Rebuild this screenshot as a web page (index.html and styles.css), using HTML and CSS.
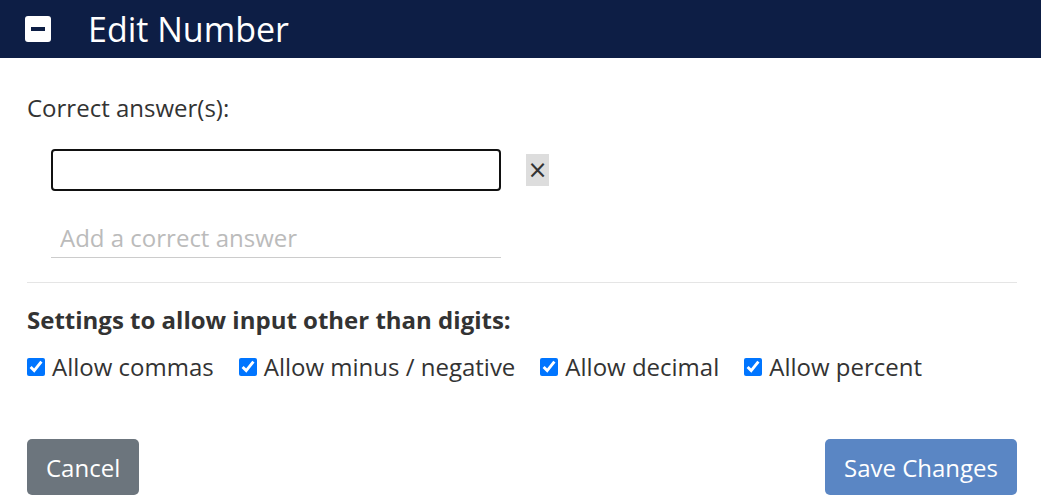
FILE: index.html
```html
<!DOCTYPE html>
<html lang="en">
<head>
    <meta charset="UTF-8">
    <title>Edit Number</title>
    <link rel="stylesheet" href="styles.css">
</head>
<body>
    <div class="header">
        <span class="collapse-icon"><span class="bar"></span></span>
        <h1>Edit Number</h1>
    </div>

    <div class="content">
        <div class="label">Correct answer(s):</div>

        <div class="answer-row">
            <input type="text" class="answer-input" autofocus>
            <button class="remove-btn">&times;</button>
        </div>
        <div class="answer-row">
            <input type="text" class="add-input" placeholder="Add a correct answer">
        </div>

        <hr class="divider">

        <div class="settings-title">Settings to allow input other than digits:</div>
        <div class="settings">
            <label class="check"><input type="checkbox" checked> Allow commas</label>
            <label class="check"><input type="checkbox" checked> Allow minus / negative</label>
            <label class="check"><input type="checkbox" checked> Allow decimal</label>
            <label class="check"><input type="checkbox" checked> Allow percent</label>
        </div>

        <div class="footer">
            <button class="btn btn-cancel">Cancel</button>
            <button class="btn btn-save">Save Changes</button>
        </div>
    </div>
</body>
</html>
```

FILE: styles.css
```css
body {
    margin: 0;
    padding: 0;
    font-family: "Open Sans", Arial, sans-serif;
    color: #333;
    background-color: white;
}

/* Header */
.header {
    background-color: #0d1e45;
    height: 58px;
    display: flex;
    align-items: center;
    padding-left: 25px;
}
.collapse-icon {
    width: 26px;
    height: 26px;
    background-color: white;
    border-radius: 3px;
    display: flex;
    align-items: center;
    justify-content: center;
    margin-right: 37px;
}
.collapse-icon .bar {
    width: 14px;
    height: 4px;
    background-color: #0d1e45;
}
.header h1 {
    margin: 0;
    color: white;
    font-weight: normal;
    font-size: 34px;
    line-height: 58px;
}

/* Body */
.content {
    padding: 0 24px 0 27px;
}
.label {
    font-size: 24px;
    line-height: 32px;
    margin-top: 34px;
}
.answer-row {
    display: flex;
    align-items: center;
    padding-left: 24px;
}
.answer-input {
    margin-top: 25px;
    width: 450px;
    height: 42px;
    box-sizing: border-box;
    border: 2px solid #111;
    border-radius: 4px;
    outline: none;
    font-family: inherit;
    font-size: 24px;
    padding: 0 6px;
}
.remove-btn {
    margin-top: 25px;
    margin-left: 25px;
    width: 23px;
    height: 32px;
    border: none;
    background-color: #ddd;
    color: #333;
    font-size: 24px;
    line-height: 1;
    padding: 0;
    font-family: "DejaVu Sans", sans-serif;
}
.add-input {
    margin-top: 27px;
    width: 450px;
    height: 40px;
    box-sizing: border-box;
    border: none;
    border-bottom: 1px solid #ccc;
    outline: none;
    font-family: inherit;
    font-size: 24px;
    padding: 0 9px;
}
.add-input::placeholder {
    color: #bbb;
}
.divider {
    border: none;
    border-top: 1px solid #e5e5e5;
    margin: 24px 0 0 0;
}
.settings-title {
    font-weight: bold;
    font-size: 24px;
    line-height: 32px;
    margin-top: 21px;
}
.settings {
    display: flex;
    gap: 25px;
    margin-top: 15px;
}
.check {
    font-size: 24px;
    line-height: 32px;
    display: flex;
    align-items: center;
    gap: 7px;
}
.check input {
    width: 18px;
    height: 18px;
    margin: 0;
}

/* Footer buttons */
.footer {
    display: flex;
    justify-content: space-between;
    margin-top: 56px;
}
.btn {
    border: none;
    border-radius: 5px;
    color: white;
    font-family: inherit;
    font-size: 24px;
    height: 56px;
    padding: 0 19px;
}
.btn-cancel {
    background-color: #6c757d;
}
.btn-save {
    background-color: #5a86c4;
}
```
